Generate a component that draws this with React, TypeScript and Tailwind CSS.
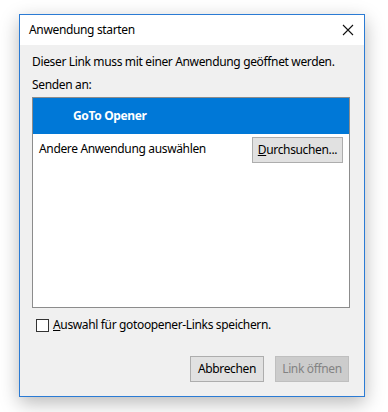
export default function App() {
  return (
    <div
      className="w-[388px] h-[412px] bg-white pt-[14px] pl-[19px] text-[12px] text-black tracking-[-0.35px]"
      style={{ fontFamily: '"Segoe UI", "Noto Sans", sans-serif' }}
    >
      <div className="w-[346px] h-[383px] border border-[#2b7bd4] bg-[#f0f0f0] flex flex-col shadow-[0_6px_18px_rgba(0,0,0,0.28)]">
        {/* Title bar */}
        <div className="h-[30px] bg-white flex items-center justify-between pl-[9px] pr-[8px]">
          <span className="text-[12px] leading-none">Anwendung starten</span>
          <svg width="12" height="12" viewBox="0 0 12 12" className="mr-[2px]">
            <path d="M1 1L11 11M11 1L1 11" stroke="#111" strokeWidth="1.1" fill="none" />
          </svg>
        </div>

        {/* Body */}
        <div className="flex-1 flex flex-col pl-[12px] pr-[14px]">
          <p className="mt-[9px] leading-[16px] whitespace-nowrap">Dieser Link muss mit einer Anwendung geöffnet werden.</p>
          <p className="mt-[7px] leading-[16px]">Senden an:</p>

          <div className="mt-[4px] h-[211px] border border-[#8c8c8c] bg-white flex flex-col">
            <div className="h-[36px] bg-[#0078d7] flex items-center pl-[40px]">
              <span className="text-white font-bold">GoTo Opener</span>
            </div>
            <div className="h-[30px] flex items-center justify-between pl-[6px] pr-[6px]">
              <span>Andere Anwendung auswählen</span>
              <button className="w-[91px] h-[26px] bg-[#e1e1e1] border border-[#adadad] flex items-center justify-center mt-[2px]">
                <span>
                  <span className="underline">D</span>urchsuchen...
                </span>
              </button>
            </div>
          </div>

          <label className="mt-[8px] flex items-center">
            <span className="w-[13px] h-[13px] border border-[#333] bg-white ml-[4px] mr-[4px]" />
            <span>
              <span className="underline">A</span>uswahl für gotoopener-Links speichern.
            </span>
          </label>

          <div className="mt-auto mb-[14px] flex justify-end gap-[11px] pr-[1px]">
            <button className="w-[74px] h-[26px] bg-[#e1e1e1] border border-[#adadad]">Abbrechen</button>
            <button className="w-[74px] h-[26px] bg-[#cccccc] border border-[#bfbfbf] text-[#838383]">Link öffnen</button>
          </div>
        </div>
      </div>
    </div>
  )
}
